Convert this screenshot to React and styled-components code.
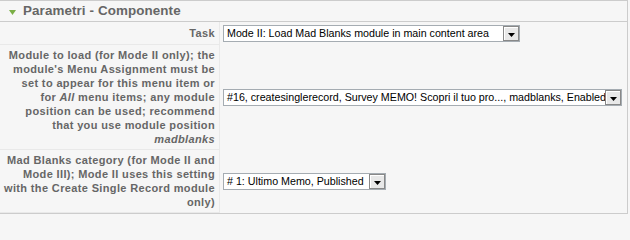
import React from "react";
import styled, { createGlobalStyle } from "styled-components";

const Global = createGlobalStyle`
  html, body { margin: 0; padding: 0; background: #f6f6f6; }
  body { font-family: "Liberation Sans", Arial, sans-serif; font-size: 11px; }
`;

const Panel = styled.div`
  width: 627px;
  border: 1px solid #cccccc;
  border-left: none;
  background: #f6f6f6;
  overflow: hidden;
`;

const Title = styled.h3`
  margin: 0;
  height: 20px;
  display: flex;
  align-items: center;
  gap: 7px;
  padding-left: 9px;
  border-bottom: 1px solid #cccccc;
  color: #666666;
  font-family: "Liberation Sans", Arial, sans-serif;
  font-size: 13.4px;
  font-weight: bold;
  letter-spacing: 0.1px;
  line-height: 20px;
`;

const Toggle = styled.svg`
  width: 7px;
  height: 5px;
  flex: none;
  margin-top: 2px;
`;

const Grid = styled.div`
  display: grid;
  grid-template-columns: 220px 1fr;
`;

const Key = styled.div`
  box-sizing: border-box;
  padding: 3px 4px 3px 4px;
  border-right: 1px solid #e9e9e9;
  border-bottom: 1px solid #e9e9e9;
  background: #f6f6f6;
  color: #666666;
  font-weight: bold;
  font-size: 11px;
  letter-spacing: 0.36px;
  line-height: 14px;
  text-align: right;
  display: flex;
  align-items: center;
  justify-content: flex-end;
`;

const Value = styled.div`
  padding: 3px 3px;
  display: flex;
  align-items: center;
`;

const Select = styled.div`
  box-sizing: border-box;
  width: ${(p) => p.$w}px;
  height: 17px;
  display: flex;
  align-items: stretch;
  background: #ffffff;
  border: 1px solid #a5acb2;
`;

const SelText = styled.span`
  flex: 1;
  min-width: 0;
  overflow: hidden;
  white-space: nowrap;
  padding-left: 3px;
  color: #000000;
  font-size: 10.7px;
  line-height: 15px;
`;

const Arrow = styled.span`
  box-sizing: border-box;
  width: 16px;
  flex: none;
  background: #e8e8e8;
  border: 1px solid #888888;
  box-shadow: inset 1px 1px 0 #ffffff;
  display: flex;
  align-items: center;
  justify-content: center;
  padding-top: 3px;
`;

const DropSelect = ({ w, children }) => (
  <Select $w={w}>
    <SelText>{children}</SelText>
    <Arrow>
      <svg width="7" height="4" viewBox="0 0 7 4">
        <path d="M0 0H7L3.5 4Z" fill="#000" />
      </svg>
    </Arrow>
  </Select>
);

export default function App() {
  return (
    <>
      <Global />
      <Panel>
        <Title>
          <Toggle viewBox="0 0 7 5">
            <path d="M0 0H7L3.5 5Z" fill="#7aae45" />
          </Toggle>
          Parametri - Componente
        </Title>
        <Grid>
          <Key>Task</Key>
          <Value>
            <DropSelect w={297}>
              Mode II: Load Mad Blanks module in main content area
            </DropSelect>
          </Value>

          <Key>
            <span>
              Module to load (for Mode II only); the module's Menu Assignment
              must be set to appear for this menu item or for <i>All</i> menu
              items; any module position can be used; recommend that you use
              module position <i>madblanks</i>
            </span>
          </Key>
          <Value>
            <DropSelect w={399}>
              #16, createsinglerecord, Survey MEMO! Scopri il tuo pro...,
              madblanks, Enabled
            </DropSelect>
          </Value>

          <Key>
            <span>
              Mad Blanks category (for Mode II and Mode III); Mode II uses this
              setting with the Create Single Record module only)
            </span>
          </Key>
          <Value>
            <DropSelect w={163}># 1: Ultimo Memo, Published</DropSelect>
          </Value>
        </Grid>
      </Panel>
    </>
  );
}
